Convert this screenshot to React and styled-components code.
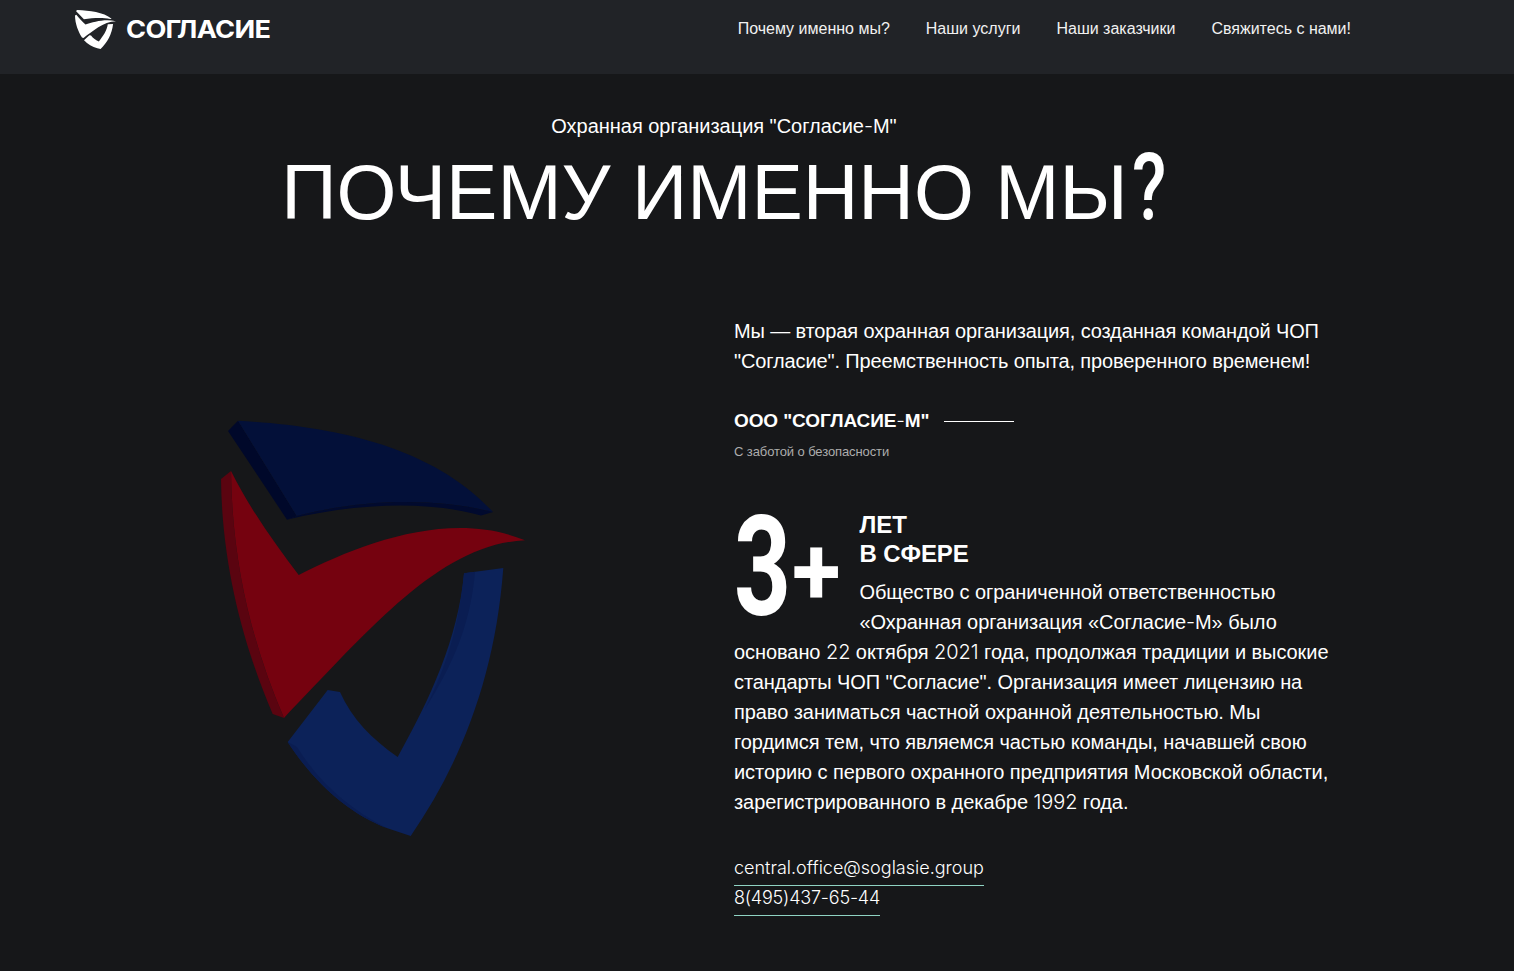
import React from "react";
import styled, { createGlobalStyle } from "styled-components";

const Global = createGlobalStyle`
  html, body { margin: 0; padding: 0; background: #161719; }
  body { font-family: "Liberation Sans", Arial, sans-serif; color: #fff; overflow-x: hidden; }
  * { box-sizing: border-box; }
`;
const Page = styled.div`width: 1514px; height: 971px; overflow: hidden; background: #161719;`;
const Header = styled.header`
  height: 74px; background: #212327; display: flex; align-items: flex-start;
  justify-content: space-between; padding: 0 163px 0 75px;
`;
const Brand = styled.a`display: flex; align-items: center; gap: 10px; height: 58px;`;
const BrandName = styled.span`
  display: inline-block; font-family: "Inter", sans-serif; font-weight: 700; font-size: 24px; letter-spacing: -0.6px;
  color: #fff; transform: scaleX(1.13); transform-origin: left center;
`;
const Nav = styled.nav`display: flex; gap: 36px; height: 57px; align-items: center;`;
const NavLink = styled.a`font-size: 16px; color: #f1f1f1;`;
const Hero = styled.section`width: 1448px; text-align: center; padding-top: 38px;`;
const Sub = styled.p`margin: 0; font-size: 20px; line-height: 28px; letter-spacing: -0.03px;`;
const Title = styled.h1`margin: 0; font-weight: 400; font-size: 77px; line-height: 104px;`;
const Question = styled.span`
  display: inline-block; font-family: "Roboto", sans-serif; font-size: 93px; line-height: 80px; font-weight: 500;
  transform: scaleX(0.76); transform-origin: left center; margin: 0 -10px 0 4px;
`;
const Alt = styled.span`font-family: "Inter", sans-serif; font-weight: 300;`;
const Columns = styled.section`
  display: grid; grid-template-columns: 661px 600px; padding: 72px 0 0 73px;
`;
const Art = styled.div`padding: 98px 0 0 142px;`;
const ShieldSvg = styled.svg`display: block;`;
const Lead = styled.p`margin: 0; font-size: 20px; line-height: 30px; letter-spacing: -0.13px;`;
const OrgRow = styled.div`display: flex; align-items: center; gap: 15px; margin-top: 30px;`;
const OrgName = styled.strong`font-size: 19px; line-height: 30px; font-weight: 700; letter-spacing: -0.1px;`;
const OrgRule = styled.span`width: 70px; height: 1px; background: #fff;`;
const Tagline = styled.p`margin: 5px 0 0; font-size: 13px; line-height: 22px; color: #adadad; letter-spacing: -0.1px;`;
const Story = styled.div`margin-top: 47px;`;
const Big = styled.div`
  float: left; width: 125.5px; height: 116px; display: flex; font-family: "Roboto", sans-serif; font-weight: 700;
`;
const BigDigit = styled.span`
  flex: 0 0 58px; min-width: 0; font-size: 140px; line-height: 115px; transform: scaleX(0.71); transform-origin: left top;
`;
const BigPlus = styled.span`
  font-size: 96px; line-height: 122px; transform: scaleX(0.93); transform-origin: left top;
`;
const StoryTitle = styled.h3`margin: 0 0 9px; font-size: 24px; line-height: 29px; font-weight: 700; letter-spacing: -0.1px;`;
const Body = styled.p`margin: 0; font-size: 20px; line-height: 30px; letter-spacing: -0.07px;`;
const Contacts = styled.div`margin-top: 39px; display: flex; flex-direction: column; align-items: flex-start;`;
const Contact = styled.a`
  font-family: "Inter", sans-serif; font-weight: 300; font-size: 18px; line-height: 24px; padding-bottom: 5px; color: #fff;
  border-bottom: 1px solid #8fd3c3; letter-spacing: ${p => p.$tight ? "-0.2px" : "0"};
`;

const Logo = () => (
  <svg width="41" height="39" viewBox="221 421 304 416" preserveAspectRatio="none">
    <path fill="#fff" d="M238 421.7 L228 432 L287 520.7 C360 503 430 502 481 516.5 L493 513 C430 445 330 427 238 421.7 Z" />
    <path fill="#fff" d="M231 472 L221 480 C222 570 245 650 272.7 715 L284 719 C350 650 430 545 525 541.3 C450 510 360 545 298.7 576 C275 545 250 510 231 472 Z" />
    <path fill="#fff" d="M503.3 569 L464 574.3 C458 640 430 700 397.7 758 C372 740 352 720 340 693 L327.7 691 L287.7 743 C315 785 350 815 386.7 829 L410.7 837 C460 765 495 680 503.3 569 Z" />
  </svg>
);

const Shield = () => (
  <ShieldSvg width="320" height="430" viewBox="215 415 320 430">
    <path fill="#00082a" d="M238 421.7 L228 432 L287 520.7 L296.7 517 Z" />
    <path fill="#031039" d="M238 421.7 C330 427 430 445 493 513 C440 500 370 498 296.7 517 Z" />
    <path fill="#010a2e" d="M296.7 517 C370 498 440 500 493 513 L481 516.5 C430 502 360 503 287 520.7 Z" />
    <path fill="#5a0410" d="M231 472 L221 480 C222 570 245 650 272.7 715 L284 719 C250 640 232 560 231 472 Z" />
    <path fill="#75020f" d="M231 472 C250 510 275 545 298.7 576 C360 545 450 510 525 541.3 C440 545 370 630 284 719 C250 640 232 560 231 472 Z" />
    <path fill="#0c2259" d="M503.3 569 L464 574.3 C458 640 430 700 397.7 758 C372 740 352 720 340 693 L327.7 691 L287.7 743 C315 785 350 815 386.7 829 L410.7 837 C460 765 495 680 503.3 569 Z" />
    <path fill="#0a1d52" d="M475 572.8 L464 574.3 C458 640 440 680 425 710 C450 670 470 630 475 572.8 Z" />
    <path fill="#0a1d52" d="M287.7 743 L297 748 C320 785 350 810 386.7 829 C350 815 315 785 287.7 743 Z" />
  </ShieldSvg>
);

export default function App() {
  return (
    <Page>
      <Global />
      <Header>
        <Brand><Logo /><BrandName>СОГЛАСИЕ</BrandName></Brand>
        <Nav>
          <NavLink>Почему именно мы?</NavLink>
          <NavLink>Наши услуги</NavLink>
          <NavLink>Наши заказчики</NavLink>
          <NavLink>Свяжитесь с нами!</NavLink>
        </Nav>
      </Header>
      <Hero>
        <Sub>Охранная организация "Согласие<Alt>-</Alt>М"</Sub>
        <Title>ПОЧЕМУ ИМЕННО МЫ<Question>?</Question></Title>
      </Hero>
      <Columns>
        <Art><Shield /></Art>
        <div>
          <Lead>Мы — вторая охранная организация, созданная командой ЧОП "Согласие". Преемственность опыта, проверенного временем!</Lead>
          <OrgRow><OrgName>ООО "СОГЛАСИЕ<Alt>-</Alt>М"</OrgName><OrgRule /></OrgRow>
          <Tagline>С заботой о безопасности</Tagline>
          <Story>
            <Big><BigDigit>3</BigDigit><BigPlus>+</BigPlus></Big>
            <StoryTitle>ЛЕТ<br />В СФЕРЕ</StoryTitle>
            <Body>Общество с ограниченной ответственностью «Охранная организация «Согласие<Alt>-</Alt>М» было основано <Alt>22</Alt> октября <Alt>2021</Alt> года, продолжая традиции и высокие стандарты ЧОП "Согласие". Организация имеет лицензию на право заниматься частной охранной деятельностью. Мы гордимся тем, что являемся частью команды, начавшей свою историю с первого охранного предприятия Московской области, зарегистрированного в декабре <Alt>1992</Alt> года.</Body>
          </Story>
          <Contacts>
            <Contact>central.office@soglasie.group</Contact>
            <Contact $tight>8(495)437-65-44</Contact>
          </Contacts>
        </div>
      </Columns>
    </Page>
  );
}
